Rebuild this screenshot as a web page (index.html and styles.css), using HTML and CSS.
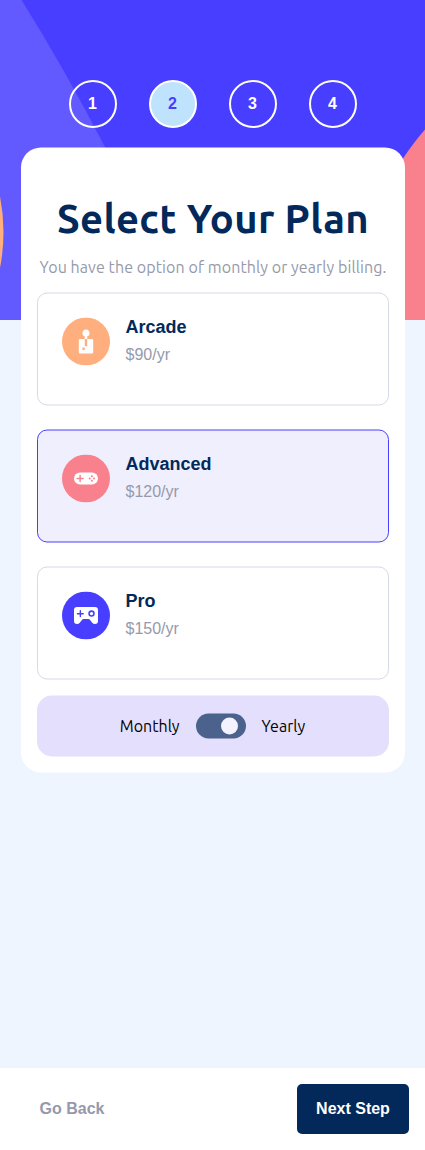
FILE: index.html
```html
<!DOCTYPE html>
<html lang="en">
<head>
<meta charset="utf-8">
<meta name="viewport" content="width=device-width, initial-scale=1">
<title>Select Your Plan</title>
<link rel="stylesheet" href="styles.css">
</head>
<body>
<div class="page">
  <svg class="backdrop" viewBox="0 0 425 320" aria-hidden="true">
    <rect width="425" height="320" fill="#483EFF"/>
    <path d="M0 0H21.5Q64 68 105.500 148Q150 240 140 320H0Z" fill="#6259FF"/>
    <circle cx="-181.5" cy="232" r="185" fill="#FFAF7E"/>
    <path d="M425 129.500Q414 142 403 158.500Q370 210 360 320H425Z" fill="#F9818E"/>
  </svg>
  <nav class="steps">
    <span class="step">1</span>
    <span class="step step-active">2</span>
    <span class="step">3</span>
    <span class="step">4</span>
  </nav>
  <main class="card">
    <h1 class="title">Select Your Plan</h1>
    <p class="subtitle">You have the option of monthly or yearly billing.</p>
    <div class="plans">
      <div class="plan">
        <svg class="plan-icon" viewBox="0 0 40 40">
          <circle cx="20" cy="20" r="20" fill="#FFAF7E"/>
          <path fill="#fff" d="M24.995 18.005h-3.998v5.998h-2v-5.998H15a1 1 0 0 0-1 1V29a1 1 0 0 0 1 1h9.995a1 1 0 0 0 1-1v-9.995a1 1 0 0 0-1-1Zm-5.997 8.996h-2v-1.999h2v2Zm2-11.175a2.999 2.999 0 1 0-2 0v2.180h2v-2.180Z"/>
        </svg>
        <div class="plan-text"><h2 class="plan-name">Arcade</h2><p class="plan-price">$90/yr</p></div>
      </div>
      <div class="plan plan-selected">
        <svg class="plan-icon" viewBox="0 0 40 40">
          <circle cx="20" cy="20" r="20" fill="#F9818E"/>
          <rect x="10" y="15" width="20" height="9.900" rx="4.950" fill="#fff"/>
          <path d="M15.100 17.500v5M12.600 20h5" stroke="#F9818E" stroke-width="1.200" stroke-linecap="round"/>
          <g fill="#F9818E"><circle cx="24.900" cy="18.200" r=".85"/><circle cx="24.900" cy="21.800" r=".85"/><circle cx="23.100" cy="20" r=".85"/><circle cx="26.700" cy="20" r=".85"/></g>
        </svg>
        <div class="plan-text"><h2 class="plan-name">Advanced</h2><p class="plan-price">$120/yr</p></div>
      </div>
      <div class="plan">
        <svg class="plan-icon" viewBox="0 0 40 40">
          <circle cx="20" cy="20" r="20" fill="#483EFF"/>
          <path fill="#fff" d="M12.500 13H27.500Q30 13 30 15.500V24.500Q30 27 27.500 27Q26 27 25.200 26L23.200 23.600Q22.700 23 22 23H18Q17.300 23 16.800 23.600L14.800 26Q14 27 12.500 27Q10 27 10 24.500V15.500Q10 13 12.500 13Z"/>
          <path d="M15.300 16.100v4.800M12.900 18.500h4.800" stroke="#483EFF" stroke-width="1.200" stroke-linecap="round"/>
          <circle cx="24.600" cy="18.400" r="2.050" fill="none" stroke="#483EFF" stroke-width="1.300"/>
        </svg>
        <div class="plan-text"><h2 class="plan-name">Pro</h2><p class="plan-price">$150/yr</p></div>
      </div>
    </div>
    <div class="billing">
      <span class="label-monthly">Monthly</span>
      <span class="switch"><span class="knob"></span></span>
      <span class="label-yearly">Yearly</span>
    </div>
  </main>
  <footer class="footer">
    <button class="btn btn-back">Go Back</button>
    <button class="btn btn-next">Next Step</button>
  </footer>
</div>
</body>
</html>
```
FILE: styles.css
```css
* { box-sizing: border-box; margin: 0; padding: 0; }
body { background: #eef5ff; font-family: Ubuntu, "Noto Sans", sans-serif; }
.page {
  position: relative;
  isolation: isolate;
  display: flex;
  flex-direction: column;
  width: 425px;
  height: 1150px;
}
.backdrop { position: absolute; inset: 0 0 auto 0; width: 425px; height: 320px; z-index: -1; }
.steps {
  display: flex;
  justify-content: center;
  gap: 32px;
  padding: 80px 0 20px;
}
.step {
  display: grid;
  place-items: center;
  width: 48px;
  height: 48px;
  border: 2px solid #fff;
  border-radius: 50%;
  color: #fff;
  font: bold 16px "Liberation Sans", sans-serif;
}
.step-active { background: #bfe2fd; color: #483eff; }
.card {
  width: 384px;
  margin-left: 21px;
  padding: 48px 16px 16px;
  border-radius: 20px;
  background: #fff;
  transform: translateY(-0.5px);
}
.title {
  height: 46px;
  color: #02295a;
  font-size: 40px;
  line-height: 46px;
  font-weight: 700;
  letter-spacing: 0.37px;
  text-align: center;
  white-space: nowrap;
}
.subtitle {
  height: 19px;
  margin: 16px 0;
  color: #9699ab;
  font-size: 16px;
  line-height: 19px;
  letter-spacing: 0.08px;
  text-align: center;
  white-space: nowrap;
}
.plans { display: flex; flex-direction: column; gap: 24px; }
.plan {
  display: flex;
  gap: 15.500px;
  height: 113px;
  padding: 24px;
  border: 1px solid #d6d9e6;
  border-radius: 10px;
}
.plan-selected { border-color: #483eff; background: #f0effd; }
.plan-icon { width: 48px; height: 48px; }
.plan-text { font-family: "Liberation Sans", sans-serif; }
.plan-name { color: #02295a; font-size: 18px; line-height: 18px; }
.plan-price { margin-top: 10px; color: #9699ab; font-size: 16px; line-height: 18px; }
.billing {
  display: flex;
  align-items: center;
  justify-content: center;
  gap: 16px;
  height: 61px;
  margin-top: 16px;
  padding-right: 1px;
  border-radius: 15px;
  background: #e4dffc;
  color: #000;
  font-size: 16px;
  line-height: 17px;
}
.switch {
  display: flex;
  align-items: center;
  justify-content: flex-end;
  width: 50px;
  height: 25px;
  padding: 0 8px;
  border-radius: 13px;
  background: #4a628c;
}
.knob { width: 17px; height: 17px; border-radius: 50%; background: #f5f2ff; }
.footer {
  display: flex;
  align-items: center;
  justify-content: space-between;
  height: 82px;
  margin-top: auto;
  padding: 0 16px;
  background: #fff;
}
.btn {
  width: 112px;
  height: 50px;
  border: 0;
  border-radius: 5px;
  font: bold 16px "Liberation Sans", sans-serif;
}
.btn-back { background: transparent; color: #9699ab; }
.btn-next { background: #02295a; color: #fff; }
```
